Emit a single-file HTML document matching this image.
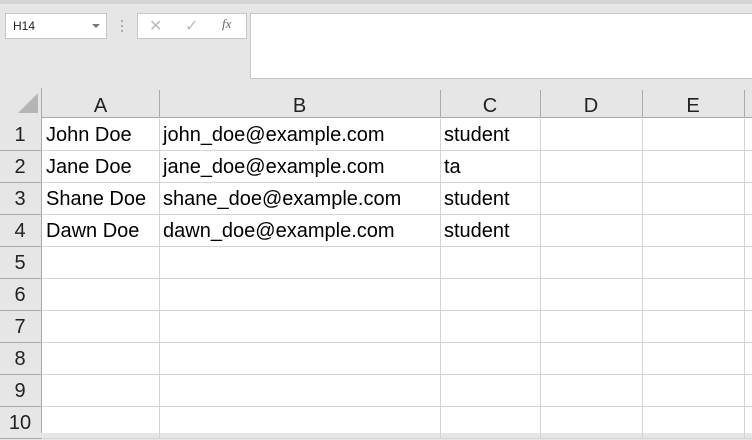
<!DOCTYPE html><html><head><style>
*{margin:0;padding:0;box-sizing:border-box}
body{width:752px;height:433px;overflow:hidden;background:#e6e6e6;font-family:"Liberation Sans",sans-serif;position:relative}
.a{position:absolute}
.t{font-size:20px;color:#000;line-height:34px}
</style></head><body>
<div class="a" style="left:0;top:0;width:752px;height:4px;background:#d4d4d4"></div>
<div class="a" style="left:5px;top:13px;width:102px;height:26px;background:#fff;border:1px solid #c6c6c6;font-size:12px;line-height:24px;padding-left:7px;color:#222">H14</div>
<div class="a" style="left:92px;top:24px;width:0;height:0;border-left:4px solid transparent;border-right:4px solid transparent;border-top:4px solid #777"></div>
<div class="a" style="left:121px;top:20px;width:2px;height:2px;background:#aaa;box-shadow:0 5px #aaa,0 10px #aaa"></div>
<div class="a" style="left:137px;top:13px;width:110px;height:26px;background:#fff;border:1px solid #c6c6c6"></div>
<div class="a" style="left:149px;top:16px;font-size:16px;color:#bbb">✕</div>
<div class="a" style="left:185px;top:16px;font-size:16px;color:#bbb">✓</div>
<div class="a" style="left:222px;top:16px;font-size:13px;color:#666;font-style:italic;font-family:'Liberation Serif',serif">fx</div>
<div class="a" style="left:250px;top:13px;width:510px;height:66px;background:#fff;border:1px solid #c6c6c6"></div>
<div class="a" style="left:0;top:88px;width:752px;height:345px;background:#fff"></div>
<div class="a" style="left:0;top:88px;width:752px;height:30px;background:#e6e6e6;border-bottom:1px solid #ababab"></div>
<div class="a" style="left:0;top:88px;width:42px;height:345px;background:#e6e6e6;border-right:1px solid #ababab"></div>
<div class="a" style="left:18px;top:93px;width:0;height:0;border-left:20px solid transparent;border-bottom:20px solid #b5b5b5"></div>
<div id="g"></div>
<script>
var cols=[42,159,440,540,642,744],names="ABCDE",h="";
for(var i=0;i<5;i++){var l=cols[i],w=cols[i+1]-l;
h+='<div class="a t" style="left:'+l+'px;top:88px;width:'+w+'px;text-align:center;line-height:36px;color:#222">'+names[i]+'</div>';
h+='<div class="a" style="left:'+cols[i+1]+'px;top:90px;width:1px;height:28px;background:#ababab"></div>';
h+='<div class="a" style="left:'+cols[i+1]+'px;top:119px;width:1px;height:320px;background:#d4d4d4"></div>';}
for(var r=0;r<10;r++){var t=118+32*r;
h+='<div class="a t" style="left:0;top:'+t+'px;width:40px;text-align:center;color:#222">'+(r+1)+'</div>';
h+='<div class="a" style="left:0;top:'+(t+32)+'px;width:42px;height:1px;background:#ababab"></div>';
h+='<div class="a" style="left:43px;top:'+(t+32)+'px;width:709px;height:1px;background:#d4d4d4"></div>';}
var d=[["John Doe","john_doe@example.com","student"],["Jane Doe","jane_doe@example.com","ta"],["Shane Doe","shane_doe@example.com","student"],["Dawn Doe","dawn_doe@example.com","student"]];
for(var r=0;r<4;r++)for(var c=0;c<3;c++)h+='<div class="a t" style="left:'+(cols[c]+4)+'px;top:'+(118+32*r)+'px">'+d[r][c]+'</div>';
document.getElementById("g").innerHTML=h;
</script>
</body></html>
